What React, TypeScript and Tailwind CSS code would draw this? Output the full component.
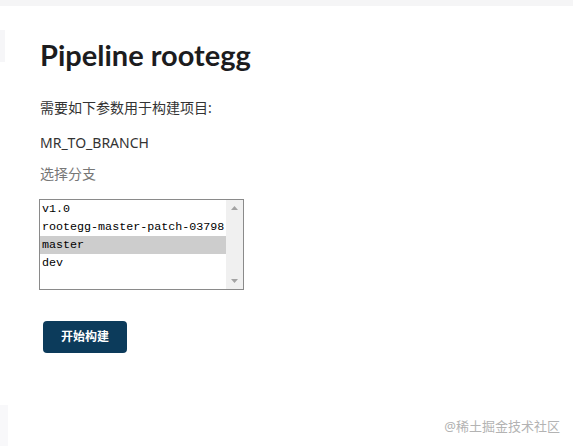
import React from 'react';

const branches = ['v1.0', 'rootegg-master-patch-03798', 'master', 'dev'];

function ScrollArrow({ up }: { up?: boolean }) {
  return (
    <svg width="7" height="4" viewBox="0 0 7 4" className="block">
      {up ? <polygon points="3.5,0 7,4 0,4" fill="#a3a3a3" /> : <polygon points="0,0 7,0 3.5,4" fill="#a3a3a3" />}
    </svg>
  );
}

export default function App() {
  const sans = { fontFamily: '"Noto Sans", "Noto Sans CJK SC", sans-serif' };
  return (
    <div className="relative w-[573px] h-[446px] bg-white overflow-hidden" style={sans}>
      <div className="h-[6px] bg-[#f5f5f6]" />
      <div className="absolute left-0 top-[30px] w-[5px] h-[32px] bg-[#f6f6f8]" />
      <div className="absolute left-0 top-[405px] w-[8px] h-[41px] bg-[#f8f8fa]" />

      <div className="pl-[40px] pt-[30px]">
        <h1
          className="text-[29px] leading-[38px] font-bold text-[#1c1c1e]"
          style={{ fontFamily: 'Lato, "Noto Sans", sans-serif' }}
        >
          Pipeline rootegg
        </h1>

        <p className="mt-[24px] text-[14px] leading-[20px] text-[#333]">需要如下参数用于构建项目:</p>
        <p className="mt-[15px] text-[14px] leading-[20px] text-[#333]">MR_TO_BRANCH</p>
        <p className="mt-[11px] text-[14px] leading-[20px] text-[#777]">选择分支</p>

        <div className="mt-[15px] -ml-[1px] flex w-[205px] h-[91px] border border-[#8a8a8a] bg-white">
          <div className="flex-1 flex flex-col" style={{ fontFamily: '"Liberation Mono", monospace' }}>
            {branches.map((b) => (
              <div
                key={b}
                className={`h-[18px] leading-[18px] pl-[2px] text-[11.7px] text-[#000] whitespace-nowrap ${b === 'master' ? 'bg-[#cdcdcd]' : ''}`}
              >
                {b}
              </div>
            ))}
          </div>
          <div className="w-[17px] bg-[#f0f0f0] flex flex-col items-center justify-between py-[6px]">
            <ScrollArrow up />
            <ScrollArrow />
          </div>
        </div>

        <button className="mt-[31px] ml-[3px] w-[84px] h-[32px] rounded-[4px] bg-[#0c3b5b] text-white text-[12px] font-bold">
          开始构建
        </button>
      </div>

      <div className="absolute right-[13px] top-[417px] text-[13px] leading-[18px] text-[#b3b3b3]">@稀土掘金技术社区</div>
    </div>
  );
}
